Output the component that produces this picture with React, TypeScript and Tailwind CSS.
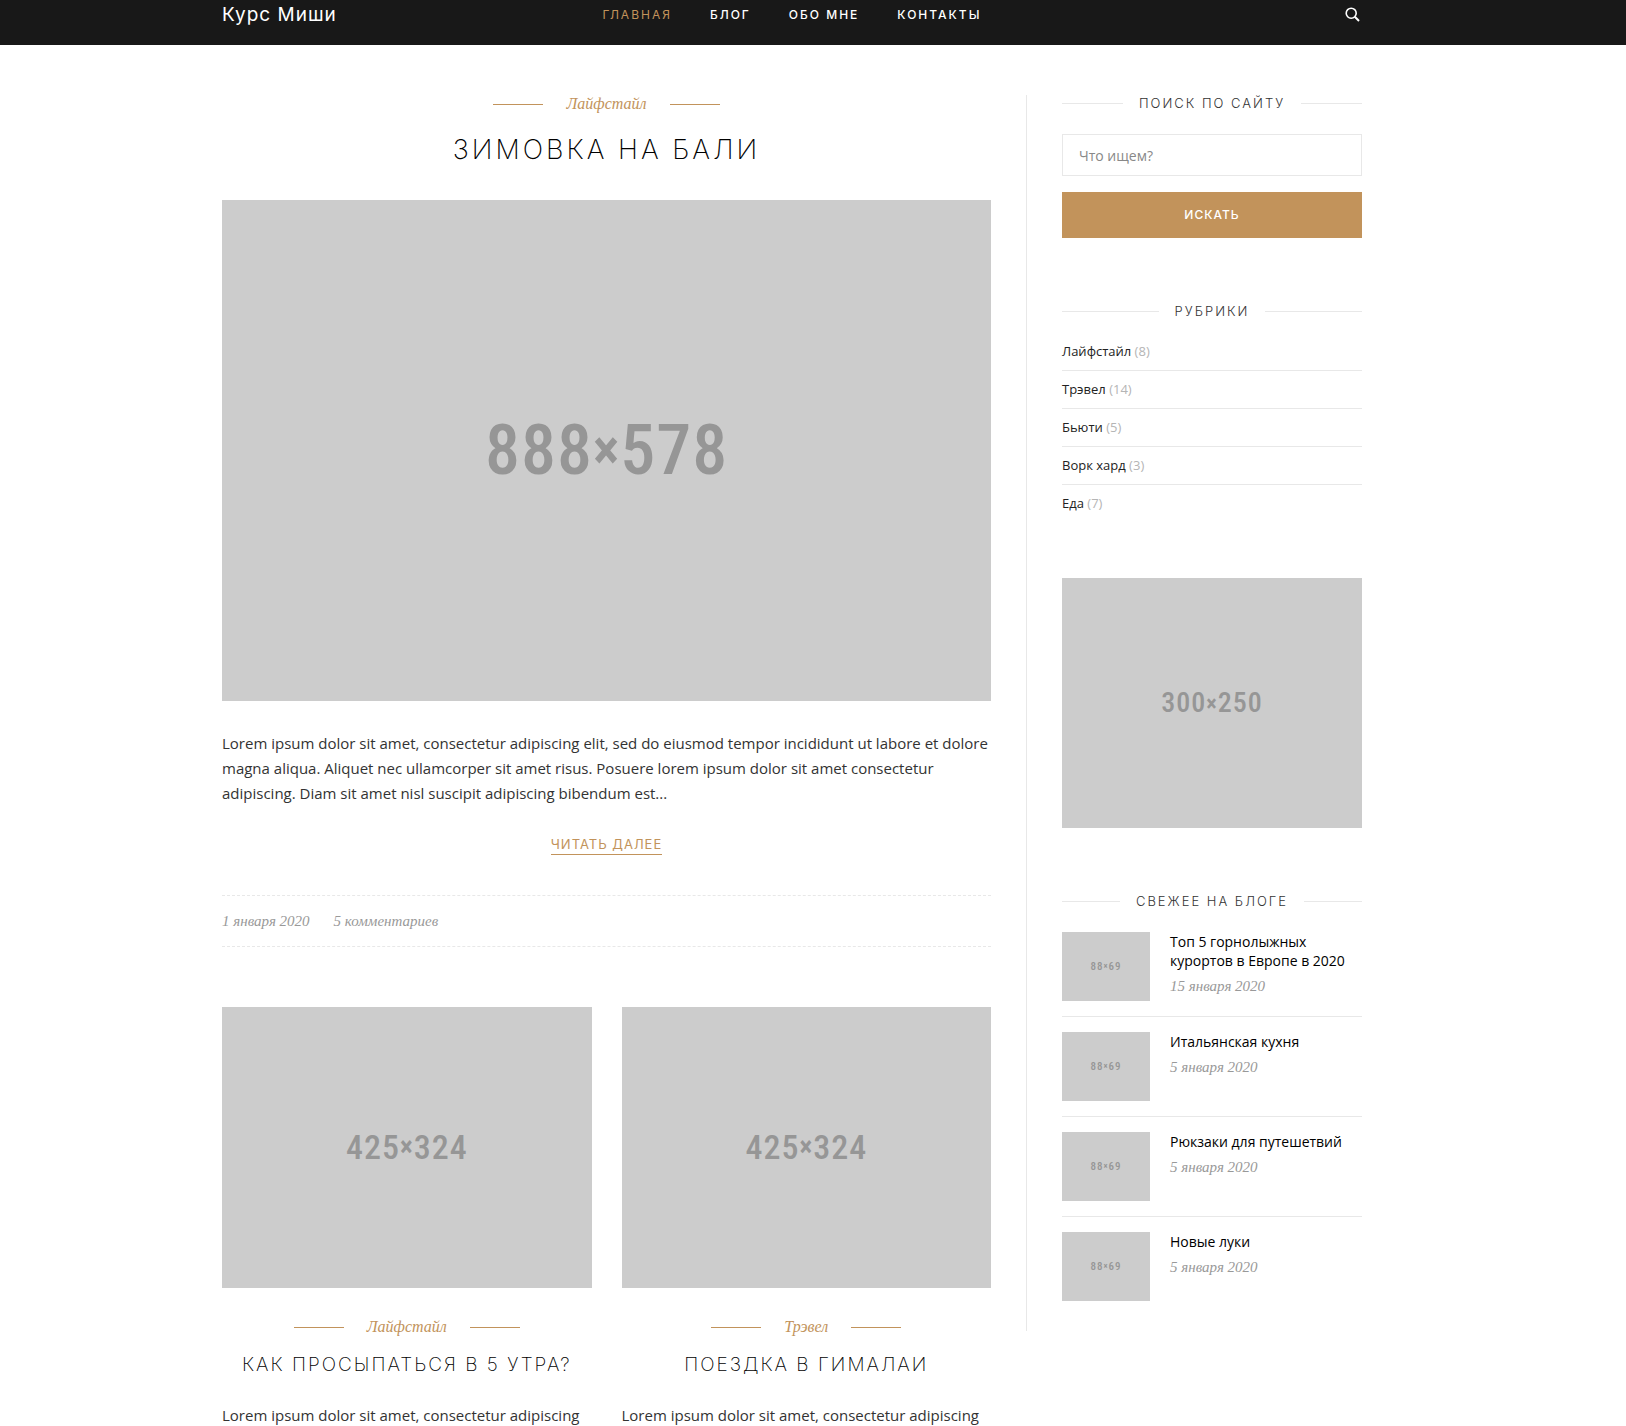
import type { ReactNode } from "react";

const NAV = ["Главная", "Блог", "Обо мне", "Контакты"];

const RUBRICS = [
  { name: "Лайфстайл", count: 8 },
  { name: "Трэвел", count: 14 },
  { name: "Бьюти", count: 5 },
  { name: "Ворк хард", count: 3 },
  { name: "Еда", count: 7 },
];

const RECENT = [
  { title: "Топ 5 горнолыжных курортов в Европе в 2020", date: "15 января 2020" },
  { title: "Итальянская кухня", date: "5 января 2020" },
  { title: "Рюкзаки для путешетвий", date: "5 января 2020" },
  { title: "Новые луки", date: "5 января 2020" },
];

const CARDS = [
  { category: "Лайфстайл", title: "Как просыпаться в 5 утра?" },
  { category: "Трэвел", title: "Поездка в Гималаи" },
];

function Container({ children, className }: { children: ReactNode; className: string }) {
  return (
    <div className="pr-[42px]">
      <div className={"mx-auto max-w-[1140px] " + className}>{children}</div>
    </div>
  );
}

function Placeholder({ width, height, className }: { width: number; height: number; className: string }) {
  return (
    <div
      className={
        "flex items-center justify-center bg-[#cccccc] font-['Roboto_Condensed','Liberation_Sans_Narrow',sans-serif] leading-none font-medium text-[#969696] " +
        className
      }
    >
      {width}
      <span className="text-[0.8em] font-bold">×</span>
      {height}
    </div>
  );
}

function Category({ name }: { name: string }) {
  return (
    <div className="flex items-center justify-center gap-[23px]">
      <span className="h-px w-[50px] bg-[#c2935b]" />
      <a href="#" className="font-['Liberation_Serif',serif] text-[16px] leading-[18px] text-[#c2935b] italic">
        {name}
      </a>
      <span className="h-px w-[50px] bg-[#c2935b]" />
    </div>
  );
}

function WidgetTitle({ children }: { children: ReactNode }) {
  return (
    <div className="flex items-center gap-4">
      <span className="h-px flex-1 bg-[#e8e8e8]" />
      <h3 className="font-['Inter',sans-serif] text-[13px] leading-[17px] font-light tracking-[2px] text-[#333333] uppercase">
        {children}
      </h3>
      <span className="h-px flex-1 bg-[#e8e8e8]" />
    </div>
  );
}

function Header() {
  return (
    <header className="bg-[#181818] pb-[17px] text-white">
      <Container className="grid h-7 grid-cols-[1fr_auto_1fr] items-center font-['Inter',sans-serif]">
        <a href="#" className="text-[19px] leading-7 tracking-[1px]">
          Курс Миши
        </a>
        <nav className="flex gap-[38px] text-[12px] leading-[30px] font-medium tracking-[2px] uppercase">
          {NAV.map((item, i) => (
            <a key={item} href="#" className={i === 0 ? "font-normal text-[#c2935b]" : ""}>
              {item}
            </a>
          ))}
        </nav>
        <button type="button" aria-label="Поиск" className="mr-[2px] mb-0.5 justify-self-end">
          <svg width="15" height="15" viewBox="0 0 15 15" fill="none" stroke="currentColor">
            <circle cx="6.2" cy="6.2" r="5" strokeWidth="1.6" />
            <path d="M9.8 9.8 14 14" strokeWidth="2" />
          </svg>
        </button>
      </Container>
    </header>
  );
}

function Sidebar() {
  return (
    <aside className="ml-[35px] w-[336px] shrink-0 self-start border-l border-[#e8e8e8] pb-[30px] pl-[35px]">
      <section className="mb-[65px]">
        <WidgetTitle>Поиск по сайту</WidgetTitle>
        <form className="mt-[22px] flex flex-col gap-4" onSubmit={(e) => e.preventDefault()}>
          <input
            type="text"
            aria-label="Что ищем?"
            placeholder="Что ищем?"
            className="h-[42px] w-full border border-[#e8e8e8] px-4 font-['Open_Sans',sans-serif] text-[14px] text-[#333333] placeholder:text-[#888888]"
          />
          <button
            type="submit"
            className="h-[46px] bg-[#c2935b] font-['Inter',sans-serif] text-[12px] font-medium tracking-[1px] text-white uppercase"
          >
            Искать
          </button>
        </form>
      </section>

      <section className="mb-14">
        <WidgetTitle>Рубрики</WidgetTitle>
        <ul className="mt-[13px] divide-y divide-[#e8e8e8] font-['Open_Sans',sans-serif] text-[13px] leading-[37px] text-[#b5b5b5]">
          {RUBRICS.map((r) => (
            <li key={r.name}>
              <a href="#" className="text-[#222222]">
                {r.name}
              </a>{" "}
              ({r.count})
            </li>
          ))}
        </ul>
      </section>

      <Placeholder width={300} height={250} className="mb-[65px] h-[250px] text-[28px] tracking-[1px]" />

      <section>
        <WidgetTitle>Свежее на блоге</WidgetTitle>
        <ul className="mt-[22px] divide-y divide-[#e8e8e8]">
          {RECENT.map((post) => (
            <li key={post.title} className="flex items-start gap-5 py-[15px] first:pt-0 last:pb-0">
              <Placeholder width={88} height={69} className="h-[69px] w-[88px] shrink-0 text-[11px] tracking-[1px]" />
              <div>
                <a href="#" className="block font-['Open_Sans',sans-serif] text-[14px] leading-[19px] text-black">
                  {post.title}
                </a>
                <time className="mt-1.5 block font-['Liberation_Serif',serif] text-[15px] leading-5 text-[#999999] italic">
                  {post.date}
                </time>
              </div>
            </li>
          ))}
        </ul>
      </section>
    </aside>
  );
}

export default function App() {
  return (
    <div className="bg-white">
      <Header />
      <Container className="flex pt-[50px]">
        <main className="min-w-0 flex-1">
          <article>
            <Category name="Лайфстайл" />
            <h1 className="mt-[17px] text-center font-['Inter',sans-serif] text-[27px] leading-10 font-extralight tracking-[3px] text-black uppercase">
              Зимовка на Бали
            </h1>
            <Placeholder width={888} height={578} className="mt-[30px] aspect-[888/578] text-[70px] tracking-[1px]" />
            <p className="mt-[30px] font-['Open_Sans',sans-serif] text-[15px] leading-[25px] text-[#333333]">
              Lorem ipsum dolor sit amet, consectetur adipiscing elit, sed do eiusmod tempor incididunt ut labore et
              dolore magna aliqua. Aliquet nec ullamcorper sit amet risus. Posuere lorem ipsum dolor sit amet
              consectetur adipiscing. Diam sit amet nisl suscipit adipiscing bibendum est...
            </p>
            <div className="mt-[29px] flex justify-center">
              <a
                href="#"
                className="border-b border-[#c2935b] font-['Inter',sans-serif] text-[13px] leading-[19px] tracking-[1px] text-[#c2935b] uppercase"
              >
                Читать далее
              </a>
            </div>
            <div className="mt-10 flex gap-6 border-y border-dashed border-[#e8e8e8] py-[15px] font-['Liberation_Serif',serif] text-[15px] leading-5 text-[#999999] italic">
              <time>1 января 2020</time>
              <a href="#">5 комментариев</a>
            </div>
          </article>

          <div className="mt-[60px] grid grid-cols-2 gap-[30px]">
            {CARDS.map((card) => (
              <article key={card.title}>
                <Placeholder width={425} height={324} className="mb-[30px] aspect-[425/324] text-[34px] tracking-[1px]" />
                <Category name={card.category} />
                <h2 className="mt-[15px] text-center font-['Inter',sans-serif] text-[19px] leading-7 font-extralight tracking-[2px] text-black uppercase">
                  {card.title}
                </h2>
                <p className="mt-6 font-['Open_Sans',sans-serif] text-[15px] leading-[25px] text-[#333333]">
                  Lorem ipsum dolor sit amet, consectetur adipiscing
                </p>
              </article>
            ))}
          </div>
        </main>
        <Sidebar />
      </Container>
    </div>
  );
}
